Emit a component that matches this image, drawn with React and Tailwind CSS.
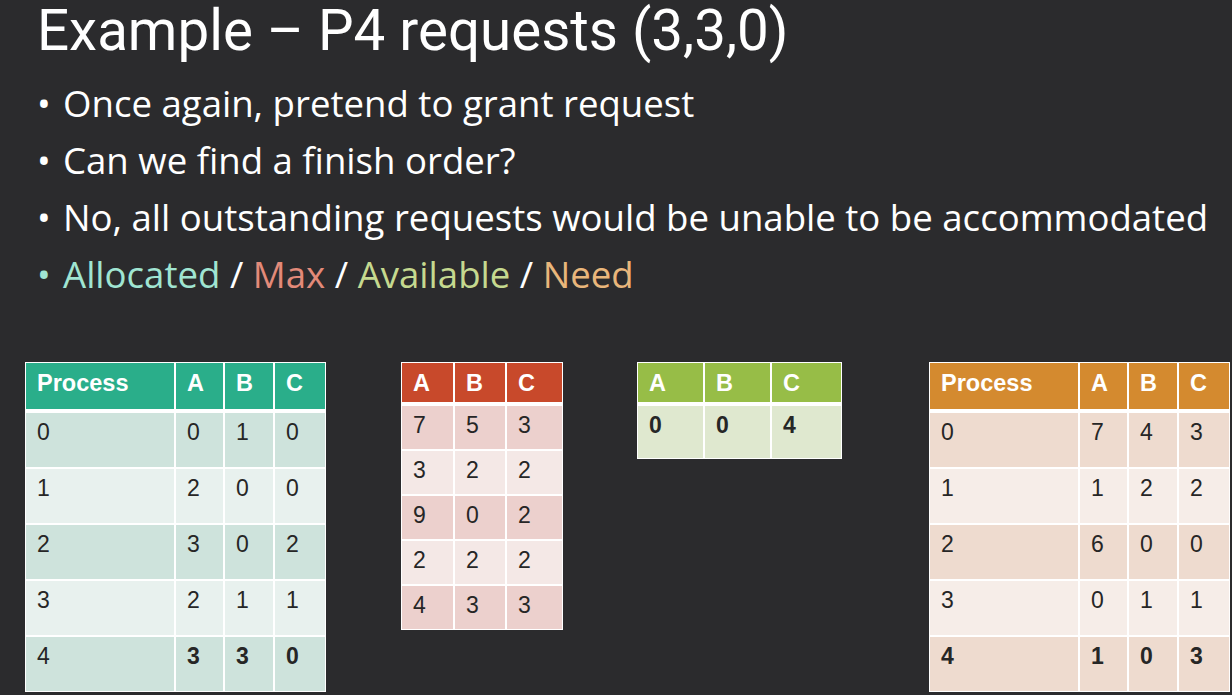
import React from "react";

const font = { fontFamily: '"Liberation Sans", Arial, sans-serif' };

function DataTable({ cols, header, headerBg, rows, oddBg, evenBg, headH, rowH, boldRows = {} }) {
  const tpl = cols.map((c) => `${c}px`).join(" ");
  return (
    <div className="bg-white p-[1px] flex flex-col shrink-0" style={font}>
      <div className="grid gap-[2px] mb-[4px]" style={{ gridTemplateColumns: tpl }}>
        {header.map((h, i) => (
          <div key={i} className="text-white font-bold text-[23.5px] leading-[26px] pl-[11px] pt-[7px]" style={{ background: headerBg, height: headH }}>
            {h}
          </div>
        ))}
      </div>
      <div className="flex flex-col gap-[2px]">
        {rows.map((r, ri) => (
          <div key={ri} className="grid gap-[2px]" style={{ gridTemplateColumns: tpl }}>
            {r.map((c, ci) => (
              <div
                key={ci}
                className={`text-[#262626] text-[23px] leading-[26px] pl-[11px] pt-[6px] ${boldRows[ri] && boldRows[ri].includes(ci) ? "font-bold" : ""}`}
                style={{ background: ri % 2 === 0 ? oddBg : evenBg, height: rowH }}
              >
                {c}
              </div>
            ))}
          </div>
        ))}
      </div>
    </div>
  );
}

export default function App() {
  const titleFont = { fontFamily: 'Roboto, "Open Sans", sans-serif' };
  const textFont = { fontFamily: '"Open Sans", Roboto, sans-serif' };
  return (
    <div className="w-[1232px] h-[695px] bg-[#2b2b2d] overflow-hidden relative">
      <div className="pl-[37px]">
        <h1 className="text-white text-[56.5px] leading-[62px] whitespace-nowrap font-normal" style={titleFont}>Example – P4 requests (3,3,0)</h1>
        <ul className="mt-[13px] text-white text-[36.6px] leading-[57px] whitespace-nowrap font-normal" style={textFont}>
          <li className="flex"><span className="w-[26px]">•</span>Once again, pretend to grant request</li>
          <li className="flex"><span className="w-[26px]">•</span>Can we find a finish order?</li>
          <li className="flex"><span className="w-[26px]">•</span>No, all outstanding requests would be unable to be accommodated</li>
          <li className="flex">
            <span className="w-[26px] text-[#a0e5d2]">•</span>
            <span className="text-[#a0e5d2]">Allocated</span>
            <span>&nbsp;/&nbsp;</span>
            <span className="text-[#e38a79]">Max</span>
            <span>&nbsp;/&nbsp;</span>
            <span className="text-[#c5d98f]">Available</span>
            <span>&nbsp;/&nbsp;</span>
            <span className="text-[#e9b67b]">Need</span>
          </li>
        </ul>
      </div>
      <div className="flex items-start mt-[59px] pl-[25px]">
        <DataTable
          cols={[148, 47, 48, 50]}
          header={["Process", "A", "B", "C"]}
          headerBg="#2aae8a"
          oddBg="#cee3dc"
          evenBg="#e8f1ee"
          headH={46}
          rowH={54}
          rows={[["0", "0", "1", "0"], ["1", "2", "0", "0"], ["2", "3", "0", "2"], ["3", "2", "1", "1"], ["4", "3", "3", "0"]]}
          boldRows={{ 4: [1, 2, 3] }}
        />
        <div className="ml-[75px]">
          <DataTable
            cols={[51, 50, 55]}
            header={["A", "B", "C"]}
            headerBg="#c8492b"
            oddBg="#ecd0cd"
            evenBg="#f4e8e6"
            headH={39}
            rowH={43}
            rows={[["7", "5", "3"], ["3", "2", "2"], ["9", "0", "2"], ["2", "2", "2"], ["4", "3", "3"]]}
          />
        </div>
        <div className="ml-[74px]">
          <DataTable
            cols={[65, 65, 69]}
            header={["A", "B", "C"]}
            headerBg="#97bd47"
            oddBg="#dfe8cf"
            evenBg="#dfe8cf"
            headH={39}
            rowH={52}
            rows={[["0", "0", "4"]]}
            boldRows={{ 0: [0, 1, 2] }}
          />
        </div>
        <div className="ml-[87px]">
          <DataTable
            cols={[148, 47, 48, 50]}
            header={["Process", "A", "B", "C"]}
            headerBg="#d48a2f"
            oddBg="#eedbcf"
            evenBg="#f6ede8"
            headH={46}
            rowH={54}
            rows={[["0", "7", "4", "3"], ["1", "1", "2", "2"], ["2", "6", "0", "0"], ["3", "0", "1", "1"], ["4", "1", "0", "3"]]}
            boldRows={{ 4: [0, 1, 2, 3] }}
          />
        </div>
      </div>
    </div>
  );
}
